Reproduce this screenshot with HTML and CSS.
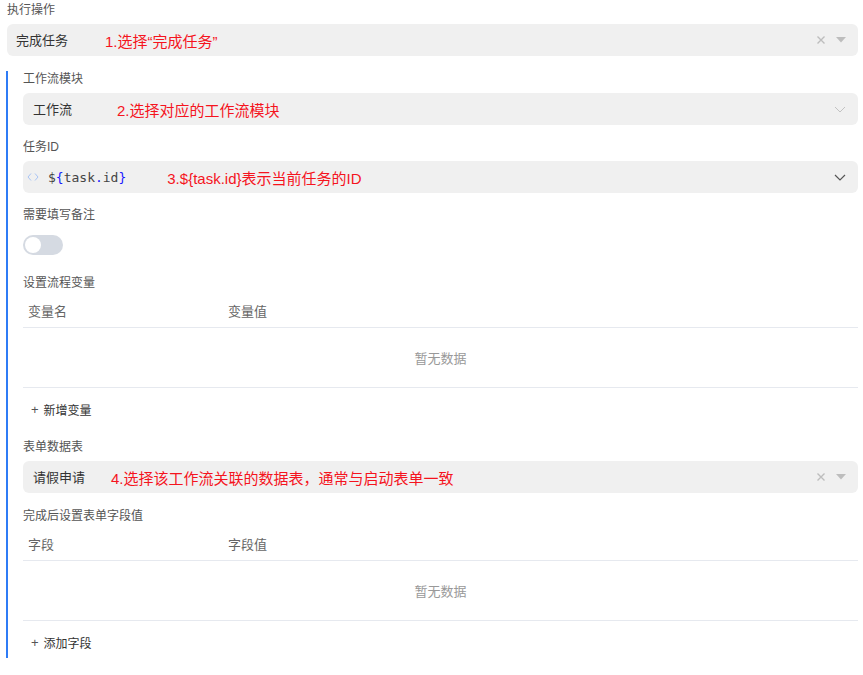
FILE: index.html
```html
<!DOCTYPE html>
<html lang="zh-CN">
<head>
  <meta charset="UTF-8">
  <title>执行操作</title>
  <link rel="stylesheet" href="styles.css">
</head>
<body>
<div class="page">

  <!-- 执行操作 -->
  <div class="form-item">
    <div class="form-label">执行操作</div>
    <div class="select">
      <span class="select-value">完成任务</span>
      <span class="note note-1">1.选择“完成任务”</span>
      <span class="select-icons">
        <svg class="icon-clear" width="10" height="10" viewBox="0 0 10 10"><path d="M1.5 1.5l7 7M8.5 1.5l-7 7" stroke="#bdbdbd" stroke-width="1.4" fill="none"/></svg>
        <svg class="icon-caret" width="10" height="6" viewBox="0 0 10 6"><path d="M0 0h10L5 5.5z" fill="#bdbdbd"/></svg>
      </span>
    </div>
  </div>

  <!-- 子配置 -->
  <div class="sub-section">
    <div class="form-item">
      <div class="form-label">工作流模块</div>
      <div class="select">
        <span class="select-value select-value-2">工作流</span>
        <span class="note note-2">2.选择对应的工作流模块</span>
        <span class="select-icons">
          <svg width="12" height="7" viewBox="0 0 12 7"><path d="M1 1l5 5 5-5" stroke="#c2c2c2" stroke-width="1" fill="none"/></svg>
        </span>
      </div>
    </div>

    <div class="form-item">
      <div class="form-label">任务ID</div>
      <div class="select code-input">
        <svg class="code-icon" width="12" height="10" viewBox="0 0 12 10"><path d="M4 1.5L1 5l3 3.5M8 1.5L11 5 8 8.5" stroke="#a9c4f5" stroke-width="1" fill="none"/></svg>
        <span class="code"><span class="c-sym">$</span><span class="c-br">{</span>task<span class="c-br">.</span>id<span class="c-br">}</span></span>
        <span class="note note-3">3.${task.id}表示当前任务的ID</span>
        <span class="select-icons">
          <svg width="12" height="7" viewBox="0 0 12 7"><path d="M1 1l5 5 5-5" stroke="#555" stroke-width="1.2" fill="none"/></svg>
        </span>
      </div>
    </div>

    <div class="form-item">
      <div class="form-label">需要填写备注</div>
      <div class="switch-row">
        <span class="switch"><span class="switch-knob"></span></span>
      </div>
    </div>

    <div class="form-item">
      <div class="form-label">设置流程变量</div>
      <div class="table">
        <div class="table-head">
          <span class="col">变量名</span>
          <span class="col">变量值</span>
        </div>
        <div class="table-empty">暂无数据</div>
      </div>
      <div class="add-btn"><span class="plus">+</span>新增变量</div>
    </div>

    <div class="form-item form-item-wide">
      <div class="form-label">表单数据表</div>
      <div class="select">
        <span class="select-value select-value-2">请假申请</span>
        <span class="note note-4">4.选择该工作流关联的数据表，通常与启动表单一致</span>
        <span class="select-icons">
          <svg class="icon-clear" width="10" height="10" viewBox="0 0 10 10"><path d="M1.5 1.5l7 7M8.5 1.5l-7 7" stroke="#bdbdbd" stroke-width="1.4" fill="none"/></svg>
          <svg class="icon-caret" width="10" height="6" viewBox="0 0 10 6"><path d="M0 0h10L5 5.5z" fill="#bdbdbd"/></svg>
        </span>
      </div>
    </div>

    <div class="form-item">
      <div class="form-label">完成后设置表单字段值</div>
      <div class="table">
        <div class="table-head">
          <span class="col">字段</span>
          <span class="col">字段值</span>
        </div>
        <div class="table-empty">暂无数据</div>
      </div>
      <div class="add-btn"><span class="plus">+</span>添加字段</div>
    </div>
  </div>

</div>
</body>
</html>
```

FILE: styles.css
```css
/* 全局样式 */
* {
  margin: 0;
  padding: 0;
  box-sizing: border-box;
}

body {
  background: #fff;
  color: #333;
  font-family: "Liberation Sans", "Noto Sans CJK SC", sans-serif;
  font-size: 13px;
}

.page {
  padding: 2px 5px 0 7px;
}

/* 表单项 */
.form-item {
  margin-bottom: 14px;
}

.form-item-wide {
  margin-bottom: 15px;
}

.form-label {
  font-size: 12px;
  line-height: 16px;
  color: #555;
  margin-bottom: 6px;
}

/* 下拉框 */
.select {
  height: 32px;
  background: #f0f0f0;
  border-radius: 6px;
  display: flex;
  align-items: center;
  padding: 0 12px 0 9px;
}

.select-value {
  font-size: 13px;
  color: #333;
  padding-bottom: 1px;
}

.select-value-2 {
  margin-left: 1px;
}

.select-icons {
  margin-left: auto;
  display: flex;
  align-items: center;
  gap: 10px;
}

/* 红色标注 */
.note {
  color: #f5141e;
  font-size: 15px;
}

.note-1 { margin-left: 37px; }
.note-2 { margin-left: 45px; }
.note-3 { margin-left: 41px; }
.note-4 { margin-left: 26px; }

/* 子配置区 */
.sub-section {
  margin-top: 15px;
  margin-left: -1px;
  border-left: 2px solid #2f7cf6;
  padding-left: 15px;
}

.sub-section .form-item:last-child {
  margin-bottom: 0;
}

/* 代码输入框 */
.code-input {
  padding-left: 4px;
}

.code-icon {
  margin-right: 9px;
}

.code {
  font-family: "DejaVu Sans Mono", monospace;
  font-size: 13px;
  color: #444;
}

.c-br {
  color: #1a1aff;
}

/* 开关 */
.switch-row {
  height: 32px;
  display: flex;
  align-items: center;
}

.switch {
  width: 40px;
  height: 20px;
  border-radius: 10px;
  background: #d5dae2;
  display: flex;
  align-items: center;
  padding: 0 2px;
}

.switch-knob {
  width: 16px;
  height: 16px;
  border-radius: 50%;
  background: #fff;
}

/* 表格 */
.table-head {
  display: flex;
  height: 31px;
  align-items: center;
  padding-bottom: 3px;
  border-bottom: 1px solid #e6e9ef;
  font-size: 13px;
  color: #666;
}

.table-head .col {
  width: 200px;
  padding-left: 5px;
}

.table-empty {
  height: 60px;
  display: flex;
  align-items: center;
  justify-content: center;
  border-bottom: 1px solid #e6e9ef;
  color: #999;
  font-size: 13px;
}

/* 添加按钮 */
.add-btn {
  height: 32px;
  margin-top: 5px;
  display: flex;
  align-items: center;
  padding-left: 8px;
  font-size: 12px;
  color: #333;
}

.plus {
  font-size: 13px;
  color: #555;
  margin-right: 5px;
}
```
